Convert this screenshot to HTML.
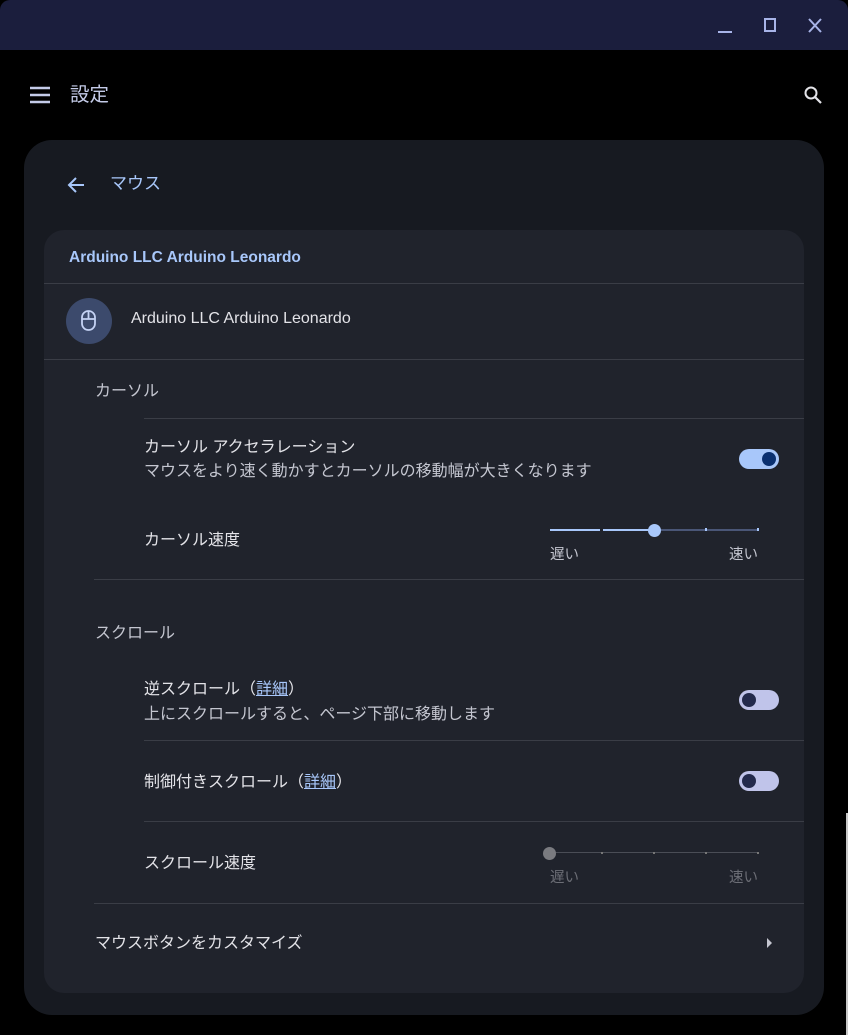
<!DOCTYPE html>
<html><head><meta charset="utf-8"><style>
*{margin:0;padding:0;box-sizing:border-box}
body{width:848px;height:1035px;background:#000;font-family:"Liberation Sans","Noto Sans CJK JP",sans-serif;position:relative;overflow:hidden;color:#e3e3e8}
.a{position:absolute}
.title{left:0;top:0;width:848px;height:50px;background:#1b1e3d;border-radius:10px 10px 0 0}
.outer{left:24px;top:140px;width:800px;height:875px;background:#171a21;border-radius:28px}
.inner{left:44px;top:230px;width:760px;height:763px;background:#20232c;border-radius:20px}
.line{height:1px;background:#3a3d46}
.t{font-size:16px;color:#e3e3e8;white-space:nowrap}
.s{font-size:16px;color:#c4c6d0;white-space:nowrap}
.tog{width:40px;height:20px;border-radius:10px}
.knob{position:absolute;top:3px;width:14px;height:14px;border-radius:7px}
a{color:#a8c7fa}
</style></head><body>
<div class="a title"></div>
<div class="a" style="left:718px;top:31px;width:14px;height:2px;background:#a8b4e8"></div>
<div class="a" style="left:764px;top:18px;width:12px;height:14px;border:2px solid #a8b4e8"></div>
<svg class="a" style="left:806px;top:17px" width="18" height="17"><path d="M3 2L15 15M15 2L3 15" stroke="#a8b4e8" stroke-width="2"/></svg>
<svg class="a" style="left:30px;top:86px" width="22" height="18"><path d="M0 2H20M0 9H20M0 16H20" stroke="#c4cbe8" stroke-width="2.4"/></svg>
<div class="a" style="left:70px;top:78px;font-size:19.5px;color:#c4cbe8">設定</div>
<svg class="a" style="left:803px;top:85px" width="22" height="22"><circle cx="8" cy="8" r="5.5" fill="none" stroke="#e3e3e8" stroke-width="2"/><path d="M12 12L18 18" stroke="#e3e3e8" stroke-width="2.2"/></svg>
<div class="a" style="right:0;top:813px;width:3px;height:222px;border-right:2px solid #c8c8c8"></div>
<div class="a outer"></div>
<svg class="a" style="left:66px;top:176px" width="20" height="18"><path d="M18 9H3M10 2L3 9L10 16" fill="none" stroke="#a8c7fa" stroke-width="2"/></svg>
<div class="a" style="left:110px;top:169px;font-size:17px;color:#a8c7fa">マウス</div>
<div class="a inner"></div>
<div class="a" style="left:69px;top:249px;font-size:15.5px;font-weight:bold;color:#a8c7fa">Arduino LLC Arduino Leonardo</div>
<div class="a line" style="left:44px;top:283px;width:760px"></div>
<div class="a" style="left:66px;top:298px;width:46px;height:46px;border-radius:23px;background:#3c4a6c"></div>
<svg class="a" style="left:79px;top:309px" width="20" height="24"><rect x="3" y="2" width="13" height="19" rx="6.5" fill="none" stroke="#c4d2f4" stroke-width="1.8"/><path d="M3 10H16M9.5 2V10" stroke="#c4d2f4" stroke-width="1.8"/></svg>
<div class="a t" style="left:131px;top:310px">Arduino LLC Arduino Leonardo</div>
<div class="a line" style="left:44px;top:359px;width:760px"></div>
<div class="a s" style="left:95px;top:377px">カーソル</div>
<div class="a line" style="left:144px;top:418px;width:660px"></div>
<div class="a t" style="left:144px;top:433px">カーソル アクセラレーション</div>
<div class="a s" style="left:144px;top:457px">マウスをより速く動かすとカーソルの移動幅が大きくなります</div>
<div class="a tog" style="left:739px;top:449px;background:#a8c7fa"><div class="knob" style="left:23px;background:#0a3070"></div></div>
<div class="a t" style="left:144px;top:526px">カーソル速度</div>
<div class="a" style="left:550px;top:529px;width:104px;height:2px;background:#a8c7fa"></div>
<div class="a" style="left:654px;top:529px;width:105px;height:2px;background:#4a5677"></div>
<div class="a" style="left:600px;top:529px;width:3px;height:2px;background:#20232c"></div>
<div class="a" style="left:705px;top:528px;width:2px;height:3px;background:#a8c7fa"></div>
<div class="a" style="left:757px;top:528px;width:2px;height:3px;background:#a8c7fa"></div>
<div class="a" style="left:648px;top:524px;width:13px;height:13px;border-radius:7px;background:#a8c7fa"></div>
<div class="a s" style="left:550px;top:543px;font-size:14.5px">遅い</div>
<div class="a s" style="left:729px;top:543px;font-size:14.5px">速い</div>
<div class="a line" style="left:94px;top:579px;width:710px"></div>
<div class="a s" style="left:95px;top:619px">スクロール</div>
<div class="a t" style="left:144px;top:675px">逆スクロール（<a style="text-decoration:underline">詳細</a>）</div>
<div class="a s" style="left:144px;top:700px">上にスクロールすると、ページ下部に移動します</div>
<div class="a tog" style="left:739px;top:690px;background:#c0c4ea"><div class="knob" style="left:3px;background:#232a4c"></div></div>
<div class="a line" style="left:144px;top:740px;width:660px"></div>
<div class="a t" style="left:144px;top:768px">制御付きスクロール（<a style="text-decoration:underline">詳細</a>）</div>
<div class="a tog" style="left:739px;top:771px;background:#c0c4ea"><div class="knob" style="left:3px;background:#232a4c"></div></div>
<div class="a line" style="left:144px;top:821px;width:660px"></div>
<div class="a t" style="left:144px;top:849px">スクロール速度</div>
<div class="a" style="left:550px;top:852px;width:209px;height:1px;background:#4a4d56"></div>
<div class="a" style="left:601px;top:852px;width:2px;height:2px;background:#777"></div>
<div class="a" style="left:653px;top:852px;width:2px;height:2px;background:#777"></div>
<div class="a" style="left:705px;top:852px;width:2px;height:2px;background:#777"></div>
<div class="a" style="left:757px;top:852px;width:2px;height:2px;background:#777"></div>
<div class="a" style="left:543px;top:847px;width:13px;height:13px;border-radius:7px;background:#7a7b80"></div>
<div class="a" style="left:550px;top:866px;font-size:14.5px;color:#6c6e76">遅い</div>
<div class="a" style="left:729px;top:866px;font-size:14.5px;color:#6c6e76">速い</div>
<div class="a line" style="left:94px;top:903px;width:710px"></div>
<div class="a t" style="left:95px;top:929px">マウスボタンをカスタマイズ</div>
<svg class="a" style="left:766px;top:937px" width="8" height="12"><path d="M1 1L6 6L1 11Z" fill="#c4c6d0"/></svg>
</body></html>
